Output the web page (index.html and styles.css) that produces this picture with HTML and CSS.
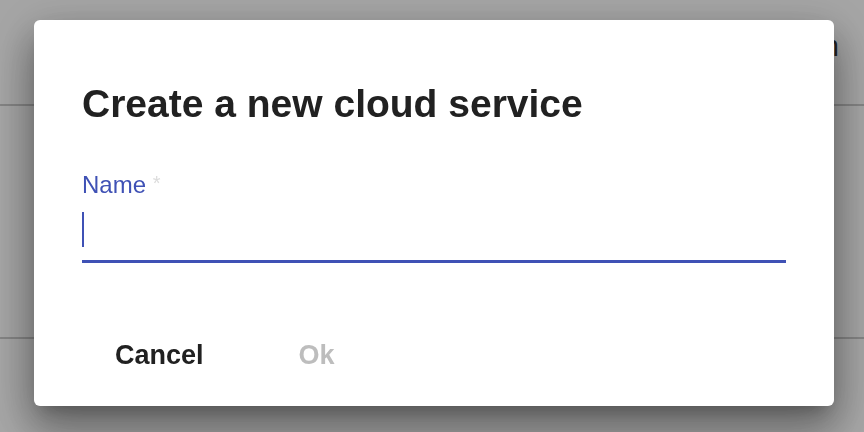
FILE: index.html
```html
<!DOCTYPE html>
<html>
<head>
<meta charset="utf-8">
<link rel="stylesheet" href="styles.css">
</head>
<body>
<div class="page">
  <header class="topbar">
    <span class="topbar-link">Sign in</span>
  </header>
  <main class="content"></main>
  <footer class="footer"></footer>
</div>
<div class="overlay">
  <div class="dialog">
    <h1 class="title">Create a new cloud service</h1>
    <div class="field">
      <label class="label">Name <span class="req">*</span></label>
      <div class="input"><span class="caret"></span></div>
    </div>
    <div class="actions">
      <button class="btn">Cancel</button>
      <button class="btn btn-disabled">Ok</button>
    </div>
  </div>
</div>
</body>
</html>
```
FILE: styles.css
```css
html, body {
  margin: 0;
  padding: 0;
  width: 864px;
  height: 432px;
  overflow: hidden;
  font-family: "Liberation Sans", Arial, sans-serif;
  background: #fafafa;
}
.page {
  display: flex;
  flex-direction: column;
  height: 432px;
}
.topbar {
  height: 106px;
  border-bottom: 2px solid #c8c8c8;
  display: flex;
  justify-content: flex-end;
  align-items: flex-start;
  padding: 29px 25px 0 0;
  box-sizing: border-box;
}
.topbar-link {
  font-size: 29px;
  line-height: 34px;
  color: #333;
}
.content {
  height: 233px;
  border-bottom: 2px solid #c8c8c8;
  box-sizing: border-box;
}
.overlay {
  position: fixed;
  inset: 0;
  background: rgba(0, 0, 0, 0.34);
}
.dialog {
  position: absolute;
  left: 34px;
  top: 20px;
  width: 800px;
  height: 386px;
  box-sizing: border-box;
  background: #fff;
  border-radius: 6px;
  padding: 0 48px;
  display: flex;
  flex-direction: column;
  box-shadow: 0 11px 15px -7px rgba(0,0,0,.2), 0 24px 38px 3px rgba(0,0,0,.14), 0 9px 46px 8px rgba(0,0,0,.12), 0 22px 44px 0 rgba(0,0,0,.22);
}
.title {
  margin: 61px 0 0 0;
  font-size: 39px;
  line-height: 46px;
  font-weight: bold;
  color: #212121;
}
.field {
  margin-top: 44px;
  display: flex;
  flex-direction: column;
}
.label {
  font-size: 24px;
  line-height: 28px;
  color: #3f51b5;
}
.req {
  color: #dcdcdc;
  font-size: 20px;
  vertical-align: top;
  line-height: 24px;
}
.input {
  height: 61px;
  border-bottom: 3px solid #3f51b5;
  display: flex;
  align-items: flex-start;
}
.caret {
  width: 2px;
  height: 35px;
  margin-top: 13px;
  background: #3f51b5;
}
.actions {
  margin-top: 72px;
  display: flex;
}
.btn {
  font-family: "Liberation Sans", Arial, sans-serif;
  font-size: 27px;
  font-weight: bold;
  color: #212121;
  background: none;
  border: none;
  padding: 0 33px;
  height: 40px;
  line-height: 40px;
}
.btn-disabled {
  color: #bdbdbd;
  padding-left: 62px;
}
```
